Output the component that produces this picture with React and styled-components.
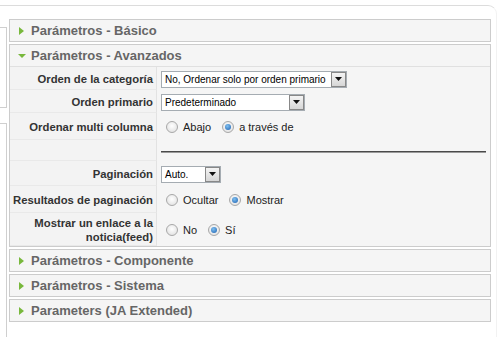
import React from "react";
import styled, { createGlobalStyle, css } from "styled-components";

const Global = createGlobalStyle`
  html, body { margin: 0; padding: 0; background: #fff; }
  body { font-family: "Liberation Sans", Arial, sans-serif; color: #333; }
  #root { width: 500px; height: 337px; overflow: hidden; }
`;

const Page = styled.div`
  padding-top: 5px;
  height: 332px;
`;

const Frame = styled.div`
  height: 100%;
  margin-right: 3px;
  border-top: 1px solid #dcdcdc;
  border-right: 1px solid #f2f2f2;
  border-top-right-radius: 9px;
  display: flex;
  padding-top: 13px;
  box-sizing: border-box;
`;

const Side = styled.div`
  width: 7px;
  display: flex;
  flex-direction: column;
`;

const SideBox = styled.div`
  width: 6px;
  border: 1px solid #cfcfcf;
  border-left: none;
  ${(p) =>
    p.$grow
      ? css`
          flex: 1;
          margin-top: 15px;
          border-bottom: none;
        `
      : css`
          margin-top: 8px;
          height: 79px;
        `}
`;

const Main = styled.div`
  margin-left: 2px;
  width: 482px;
  display: flex;
  flex-direction: column;
  gap: 2px;
`;

const Panel = styled.div`
  border: 1px solid #cccccc;
  background: #f5f5f5;
`;

const Header = styled.div`
  height: 21px;
  display: flex;
  align-items: center;
  padding-left: 8px;
  font-size: 13px;
  font-weight: bold;
  color: #666;
  gap: 5px;
  ${(p) => p.$open && css`border-bottom: 1px solid #e0e0e0;`}
`;

const Arrow = ({ open }) =>
  open ? (
    <svg width="8" height="8" viewBox="0 0 8 8">
      <polygon points="0,2 8,2 4,6" fill="#78b83c" />
    </svg>
  ) : (
    <svg width="8" height="8" viewBox="0 0 8 8">
      <polygon points="1,0 6,4 1,8" fill="#78b83c" />
    </svg>
  );

const Grid = styled.div`
  display: grid;
  grid-template-columns: 147px 1fr;
`;

const Key = styled.div`
  box-sizing: border-box;
  height: ${(p) => p.$h}px;
  border-right: 1px solid #e2e2e2;
  border-bottom: 1px solid #e9e9e9;
  background: #f3f3f3;
  display: flex;
  align-items: center;
  justify-content: flex-end;
  text-align: right;
  padding-right: 3px;
  padding-top: 1px;
  font-size: 11.3px;
  font-weight: bold;
  color: #333;
  line-height: 14px;
  white-space: nowrap;
`;

const Val = styled.div`
  box-sizing: border-box;
  height: ${(p) => p.$h}px;
  display: flex;
  align-items: center;
  padding-left: 4px;
  padding-right: 4px;
  padding-top: 1px;
  font-size: 11px;
  color: #222;
`;

const SelectBox = styled.div`
  box-sizing: border-box;
  width: ${(p) => p.$w}px;
  height: 17px;
  border: 1px solid #a5acb2;
  background: #fff;
  display: flex;
  align-items: center;
  justify-content: space-between;
  padding-left: 3px;
  font-size: 10px;
  color: #000;
`;

const SelectBtn = styled.div`
  box-sizing: border-box;
  width: 15px;
  height: 15px;
  border: 1px solid #888;
  background: linear-gradient(#f4f4f4, #d6d6d6);
  display: flex;
  align-items: center;
  justify-content: center;
`;

const Select = ({ w, children }) => (
  <SelectBox $w={w}>
    <span>{children}</span>
    <SelectBtn>
      <svg width="7" height="4" viewBox="0 0 7 4">
        <polygon points="0,0 7,0 3.5,4" fill="#111" />
      </svg>
    </SelectBtn>
  </SelectBox>
);

const RadioDot = styled.span`
  box-sizing: border-box;
  width: 12px;
  height: 12px;
  border-radius: 50%;
  border: 1px solid #a8a8a8;
  background: radial-gradient(circle at 50% 40%, #ffffff, #dcdcdc);
  display: inline-flex;
  align-items: center;
  justify-content: center;
  margin: 0 5px 0 5px;
  &::after {
    content: "";
    width: 6px;
    height: 6px;
    border-radius: 50%;
    background: radial-gradient(circle at 40% 35%, #7fc0f0, #1c5fb0);
    display: ${(p) => (p.$on ? "block" : "none")};
  }
`;

const RadioItem = styled.label`
  display: inline-flex;
  align-items: center;
  margin-right: 6px;
`;

const Radio = ({ on, children }) => (
  <RadioItem>
    <RadioDot $on={on} />
    {children}
  </RadioItem>
);

const Rule = styled.div`
  flex: 1;
  height: 1px;
  background: #4a4a4a;
  box-shadow: 0 1px 0 #9a9a9a;
`;

const closed = (t) => (
  <Panel key={t}>
    <Header>
      <Arrow />
      {t}
    </Header>
  </Panel>
);

export default function App() {
  return (
    <>
      <Global />
      <Page>
        <Frame>
          <Side>
            <SideBox />
            <SideBox $grow />
          </Side>
          <Main>
            {closed("Parámetros - Básico")}
            <Panel>
              <Header $open>
                <Arrow open />
                Parámetros - Avanzados
              </Header>
              <Grid>
                <Key $h={23}>Orden de la categoría</Key>
                <Val $h={23}>
                  <Select w={186}>No, Ordenar solo por orden primario</Select>
                </Val>
                <Key $h={23}>Orden primario</Key>
                <Val $h={23}>
                  <Select w={144}>Predeterminado</Select>
                </Val>
                <Key $h={27}>Ordenar multi columna</Key>
                <Val $h={27}>
                  <Radio>Abajo</Radio>
                  <Radio on>a través de</Radio>
                </Val>
                <Key $h={21} />
                <Val $h={21}>
                  <Rule />
                </Val>
                <Key $h={25}>Paginación</Key>
                <Val $h={25}>
                  <Select w={60}>Auto.</Select>
                </Val>
                <Key $h={27}>Resultados de paginación</Key>
                <Val $h={27}>
                  <Radio>Ocultar</Radio>
                  <Radio on>Mostrar</Radio>
                </Val>
                <Key $h={33}>
                  Mostrar un enlace a la
                  <br />
                  noticia(feed)
                </Key>
                <Val $h={33}>
                  <Radio>No</Radio>
                  <Radio on>Sí</Radio>
                </Val>
              </Grid>
            </Panel>
            {closed("Parámetros - Componente")}
            {closed("Parámetros - Sistema")}
            {closed("Parameters (JA Extended)")}
          </Main>
        </Frame>
      </Page>
    </>
  );
}
